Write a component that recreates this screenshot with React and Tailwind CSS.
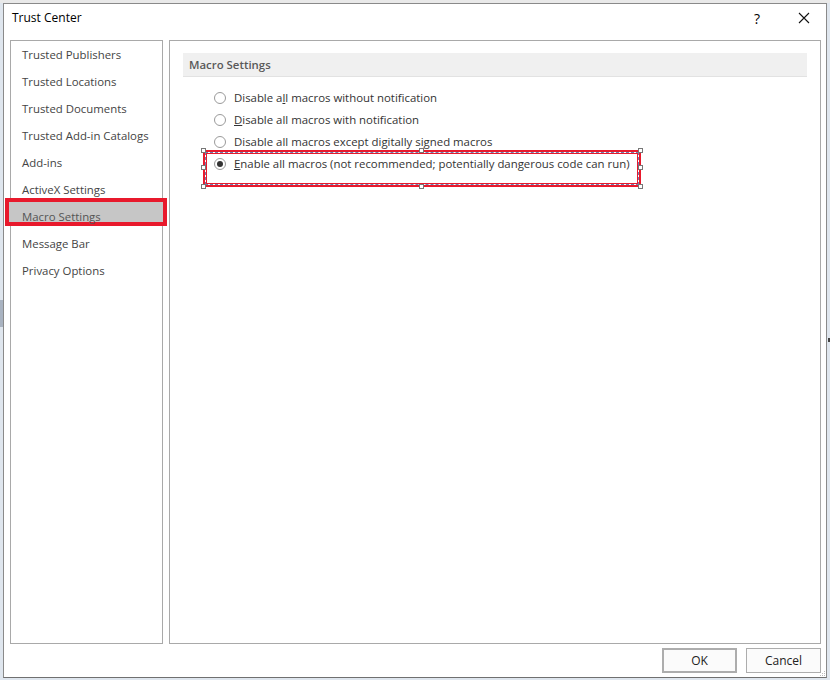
import React from 'react';

const navItems = [
  'Trusted Publishers',
  'Trusted Locations',
  'Trusted Documents',
  'Trusted Add-in Catalogs',
  'Add-ins',
  'ActiveX Settings',
  'Macro Settings',
  'Message Bar',
  'Privacy Options',
];

function Radio({ checked, children }) {
  return (
    <div className="flex items-center h-[22px]">
      <span className="relative w-[12px] h-[12px] ml-[31px] mr-[8px] rounded-full border border-[#9a9a9a] bg-white flex items-center justify-center">
        {checked && <span className="w-[6px] h-[6px] rounded-full bg-[#333]" />}
      </span>
      <span className="text-[#333]">{children}</span>
    </div>
  );
}

function Handle({ className }) {
  return <span className={'absolute w-[5px] h-[5px] bg-white border border-[#777] ' + className} />;
}

export default function App() {
  return (
    <div
      className="relative w-[830px] h-[680px] bg-[#dfe6ee] overflow-hidden text-[11.4px]"
      style={{ fontFamily: '"Open Sans", "Noto Sans", sans-serif' }}
    >
      {/* background strip behind the dialog */}
      <div className="absolute left-0 top-0 w-full h-[3px] bg-[#e9e9e9]" />
      <div className="absolute left-0 top-[300px] w-[3px] h-[27px] bg-[#a9b3c1]" />
      <div className="absolute right-0 top-[338px] w-[2px] h-[4px] bg-[#444]" />

      {/* dialog */}
      <div className="absolute left-[3px] top-[3px] w-[824px] h-[675px] bg-white border border-[#8a8a8a] border-b-[#707070] flex flex-col">
        {/* title bar */}
        <div className="h-[36px] flex items-center pb-[8px] pl-[8px] pr-[14px] shrink-0">
          <span className="text-black text-[12px]">Trust Center</span>
          <span className="ml-auto mr-[38px] text-[14px] text-black">?</span>
          <svg width="12" height="12" viewBox="0 0 12 12" className="mr-[2px]">
            <path d="M1 1 L11 11 M11 1 L1 11" stroke="#111" strokeWidth="1.1" />
          </svg>
        </div>

        {/* panels */}
        <div className="flex gap-[6px] pl-[6px] pr-[5px] h-[604px] shrink-0">
          {/* nav */}
          <div className="w-[153px] border border-[#a9a9a9] shrink-0">
            {navItems.map((item) => {
              const selected = item === 'Macro Settings';
              return (
                <div key={item} className="relative h-[27px] flex items-center pl-[11px] text-[#444]">
                  {selected && (
                    <div className="absolute left-[-6px] top-[-5px] w-[162px] h-[28px] border-[4px] border-[#e8192c] bg-[#c6c6c6]" />
                  )}
                  <span className={'relative ' + (selected ? 'text-[#555]' : '')}>{item}</span>
                </div>
              );
            })}
          </div>

          {/* settings */}
          <div className="flex-1 border border-[#a9a9a9] pt-[12px] pl-[13px] pr-[13px]">
            <div className="h-[24px] bg-[#f0f0f0] border-b border-[#e2e2e2] flex items-center pl-[6px] font-semibold text-[#595959]">
              Macro Settings
            </div>
            <div className="pt-[10px]">
              <Radio>
                Disable a<u>l</u>l macros without notification
              </Radio>
              <Radio>
                <u>D</u>isable all macros with notification
              </Radio>
              <Radio>
                Disable all macros except di<u>g</u>itally signed macros
              </Radio>
              <div className="relative">
                <Radio checked>
                  <u>E</u>nable all macros (not recommended; potentially dangerous code can run)
                </Radio>
                <div className="absolute left-[20px] top-[-3px] w-[438px] h-[37px] border-2 border-[#e8192c]">
                  <div className="absolute inset-0 border border-dashed border-[#7080b0]" />
                  <div className="absolute inset-[1px] border border-[#e8192c]" />
                  <Handle className="left-[-4px] top-[-4px]" />
                  <Handle className="left-[214px] top-[-4px]" />
                  <Handle className="right-[-4px] top-[-4px]" />
                  <Handle className="left-[-4px] top-[13px]" />
                  <Handle className="right-[-4px] top-[13px]" />
                  <Handle className="left-[-4px] bottom-[-4px]" />
                  <Handle className="left-[214px] bottom-[-4px]" />
                  <Handle className="right-[-4px] bottom-[-4px]" />
                </div>
              </div>
            </div>
          </div>
        </div>

        {/* buttons */}
        <div className="flex justify-end gap-[9px] pr-[5px] pt-[4px] relative flex-1">
          <button className="w-[75px] h-[25px] border-2 border-[#adadad] bg-[#fbfbfb] text-[#222] text-[12px]">OK</button>
          <button className="w-[75px] h-[25px] border border-[#adadad] bg-[#fbfbfb] text-[#222] text-[12px]">Cancel</button>
          <div className="absolute right-[1px] bottom-[1px] grid grid-cols-3 gap-[1px]">
            <span className="w-[1px] h-[1px]" />
            <span className="w-[1px] h-[1px]" />
            <span className="w-[1px] h-[1px] bg-[#bbb]" />
            <span className="w-[1px] h-[1px]" />
            <span className="w-[1px] h-[1px] bg-[#bbb]" />
            <span className="w-[1px] h-[1px] bg-[#bbb]" />
            <span className="w-[1px] h-[1px] bg-[#bbb]" />
            <span className="w-[1px] h-[1px] bg-[#bbb]" />
            <span className="w-[1px] h-[1px] bg-[#bbb]" />
          </div>
        </div>
      </div>
    </div>
  );
}
